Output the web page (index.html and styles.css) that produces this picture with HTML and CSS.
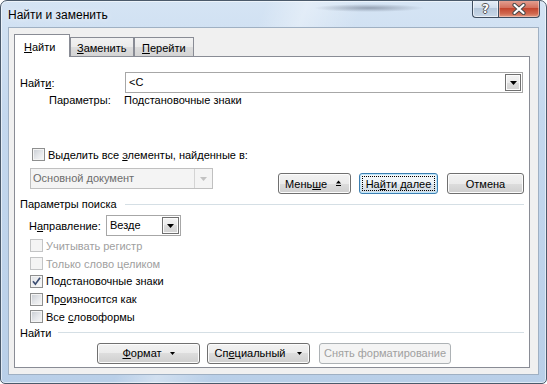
FILE: index.html
```html
<!DOCTYPE html>
<html lang="ru">
<head>
<meta charset="utf-8">
<title>Найти и заменить</title>
<link rel="stylesheet" href="styles.css">
</head>
<body>
<div class="window">
  <div class="titlebar">
    <div class="title">Найти и заменить</div>
    <div class="caption">
      <div class="cap-btn cap-help"><span>?</span></div>
      <div class="cap-btn cap-close">
        <svg width="16" height="12" viewBox="0 0 16 12">
          <path d="M3.5 2 L12.5 10 M12.5 2 L3.5 10" stroke="#4a4a4a" stroke-width="4.2" stroke-linecap="round"/>
          <path d="M3.5 2 L12.5 10 M12.5 2 L3.5 10" stroke="#ffffff" stroke-width="2.2" stroke-linecap="round"/>
        </svg>
      </div>
    </div>
  </div>
  <div class="client">
    <div class="tabs">
      <div class="tab tab-find active"><u>Н</u>айти</div>
      <div class="tab tab-replace"><u>З</u>аменить</div>
      <div class="tab tab-goto"><u>П</u>ерейти</div>
    </div>
    <div class="panel">
      <div class="find-row">
        <span class="find-label">Найт<u>и</u>:</span>
        <div class="combo combo-find">
          <span class="combo-text">&lt;C</span>
          <span class="combo-btn"><svg width="7" height="4" viewBox="0 0 7 4"><path d="M0 0H7L3.5 4Z" fill="#000"/></svg></span>
        </div>
      </div>
      <div class="params-row">
        <span class="params-label">Параметры:</span>
        <span>Подстановочные знаки</span>
      </div>
      <div class="check-row highlight-row">
        <span class="cb"></span>
        <span>Выделить все <u>э</u>лементы, найденные в:</span>
      </div>
      <div class="doc-row">
        <div class="select-disabled">
          <span class="sd-text">Основной документ</span>
          <span class="sd-btn"><svg width="7" height="4" viewBox="0 0 7 4"><path d="M0 0H7L3.5 4Z" fill="#c2c2c2"/></svg></span>
        </div>
        <div class="actions">
          <div class="btn btn-less">Мень<u>ш</u>е<svg class="less-ico" width="5" height="6" viewBox="0 0 5 6"><path d="M0 3.5L2.5 0.5L5 3.5Z" fill="#000"/><rect x="0" y="5" width="5" height="1" fill="#000"/></svg></div>
          <div class="btn btn-default">На<u>й</u>ти далее</div>
          <div class="btn btn-cancel">Отмена</div>
        </div>
      </div>
      <div class="sep sep-search"><span>Параметры поиска</span><i></i></div>
      <div class="dir-row">
        <span class="dir-label">Н<u>а</u>правление:</span>
        <div class="combo combo-dir">
          <span class="combo-text">Везде</span>
          <span class="combo-btn dir-btn"><svg width="7" height="4" viewBox="0 0 7 4"><path d="M0 0H7L3.5 4Z" fill="#000"/></svg></span>
        </div>
      </div>
      <div class="checks">
        <div class="check-row opt disabled"><span class="cb"></span><span>Учитывать регистр</span></div>
        <div class="check-row opt disabled"><span class="cb"></span><span>Только слово целиком</span></div>
        <div class="check-row opt"><span class="cb checked"><svg width="11" height="11" viewBox="0 0 11 11"><path d="M2 5.2 L4.4 8.2 L9 1.8" fill="none" stroke="#3d4f73" stroke-width="1.7"/></svg></span><span>Подстановочные знаки</span></div>
        <div class="check-row opt"><span class="cb"></span><span>Пр<u>о</u>износится как</span></div>
        <div class="check-row opt"><span class="cb"></span><span>Все <u>с</u>ловоформы</span></div>
      </div>
      <div class="sep sep-find"><span>Найти</span><i></i></div>
      <div class="bottom-row">
        <div class="btn btn-format"><span><u>Ф</u>ормат</span><svg width="5" height="3" viewBox="0 0 5 3"><path d="M0 0H5L2.5 3Z" fill="#000"/></svg></div>
        <div class="btn btn-special"><span>Сп<u>е</u>циальный</span><svg width="5" height="3" viewBox="0 0 5 3"><path d="M0 0H5L2.5 3Z" fill="#000"/></svg></div>
        <div class="btn btn-clear disabled">Снять форматирование</div>
      </div>
    </div>
  </div>
</div>
</body>
</html>
```

FILE: styles.css
```css
html, body {
  margin: 0;
  padding: 0;
  background: #ffffff;
}

body {
  width: 547px;
  height: 384px;
  overflow: hidden;
  font-family: "Liberation Sans", Arial, sans-serif;
  font-size: 11px;
  color: #000;
}

u {
  text-decoration: underline;
  text-underline-offset: 1px;
}

.window {
  box-sizing: border-box;
  width: 547px;
  height: 384px;
  border: 1px solid #4b5a6b;
  border-radius: 7px 7px 5px 5px;
  background:
    radial-gradient(ellipse 55px 4px at 368px 7px, rgba(70, 80, 100, 0.45), rgba(70, 80, 100, 0) 100%),
    linear-gradient(112deg, rgba(255,255,255,0) 0%, rgba(255,255,255,0) 38%, rgba(255,255,255,0.35) 44%, rgba(255,255,255,0) 52%, rgba(255,255,255,0) 100%),
    linear-gradient(to bottom, #d5e4f4 0%, #c4d8ee 30%, #b9cfe8 100%);
  box-shadow: inset 0 0 0 1px rgba(255, 255, 255, 0.55);
  overflow: hidden;
}

.titlebar {
  height: 26px;
  display: flex;
  justify-content: space-between;
  align-items: flex-start;
}

.title {
  margin: 7px 0 0 7px;
  line-height: 14px;
  font-size: 12px;
  color: #000;
  text-shadow: 0 0 6px rgba(255,255,255,0.9);
}

.caption {
  display: flex;
  margin: -1px 6px 0 0;
}

.cap-btn {
  box-sizing: border-box;
  height: 18px;
  border: 1px solid #3f4e60;
  border-top: none;
  display: flex;
  align-items: center;
  justify-content: center;
}

.cap-help {
  width: 26px;
  border-right: none;
  border-radius: 0 0 0 4px;
  background: linear-gradient(to bottom, #e9f0f8 0%, #d2dfee 45%, #b6c8dc 50%, #c9d8e8 100%);
  box-shadow: inset 0 0 0 1px rgba(255,255,255,0.6);
}

.cap-help span {
  font-family: "DejaVu Sans", sans-serif;
  font-weight: bold;
  font-size: 12px;
  line-height: 12px;
  color: #fff;
  text-shadow: -1px 0 0 #555, 1px 0 0 #555, 0 -1px 0 #555, 0 1px 0 #555;
}

.cap-close {
  width: 42px;
  border-radius: 0 0 4px 0;
  background: linear-gradient(to bottom, #e5a597 0%, #d4715e 45%, #c3462f 50%, #d0684f 80%, #e19a82 100%);
  box-shadow: inset 0 0 0 1px rgba(255,220,210,0.5);
}

.client {
  box-sizing: border-box;
  width: 531px;
  height: 348px;
  margin: 0 0 0 7px;
  border: 1px solid #9fb0c3;
  background: #f0f0f0;
  padding-top: 6px;
}

.tabs {
  display: flex;
  align-items: flex-end;
  height: 22px;
  margin-left: 5px;
}

.tab {
  box-sizing: border-box;
  height: 19px;
  border: 1px solid #898c95;
  border-bottom: none;
  background: linear-gradient(to bottom, #f2f2f2 0%, #ebebeb 50%, #dddddd 50%, #d4d4d4 100%);
  line-height: 14px;
  padding-top: 3px;
}

.tab.active {
  position: relative;
  z-index: 2;
  height: 23px;
  margin-bottom: -1px;
  background: #ffffff;
  padding-top: 5px;
}

.tab-find {
  width: 56px;
  padding-left: 9px;
}

.tab-replace {
  width: 64px;
  padding-left: 6px;
}

.tab-goto {
  width: 60px;
  padding-left: 7px;
}

.panel {
  position: relative;
  box-sizing: border-box;
  width: 516px;
  height: 312px;
  margin-left: 5px;
  border: 1px solid #898c95;
  background: #ffffff;
  padding: 0 5px;
}

.find-row {
  display: flex;
  align-items: center;
  height: 21px;
  margin-top: 15px;
}

.find-label {
  width: 105px;
}

.combo {
  box-sizing: border-box;
  height: 21px;
  border: 1px solid #a7a7a7;
  background: #fff;
  display: flex;
  align-items: flex-start;
  justify-content: space-between;
}

.combo-find {
  width: 398px;
}

.combo-text {
  padding-left: 3px;
  line-height: 19px;
}

.combo-btn {
  box-sizing: border-box;
  width: 16px;
  height: 17px;
  margin: 1px 1px 0 0;
  border: 1px solid #707070;
  background: linear-gradient(to bottom, #f3f3f3 0%, #ebebeb 50%, #dddddd 50%, #d2d2d2 100%);
  box-shadow: inset 0 0 0 1px #fbfbfb;
  display: flex;
  align-items: center;
  justify-content: center;
}

.params-row {
  display: flex;
  height: 14px;
  line-height: 14px;
  margin-top: 0;
}

.params-label {
  width: 75px;
  margin-left: 29px;
}

.check-row {
  display: flex;
  align-items: center;
  gap: 3px;
}

.highlight-row {
  height: 15px;
  margin-top: 40px;
  margin-left: 12px;
}

.cb {
  box-sizing: border-box;
  flex: none;
  width: 13px;
  height: 13px;
  border: 1px solid #8e8f8f;
  background: linear-gradient(135deg, #c8ccd2 0%, #e6e8eb 55%, #f8f8f8 100%);
  box-shadow: inset 0 0 0 1px #f4f4f4;
  display: flex;
  align-items: center;
  justify-content: center;
}

.cb.checked {
  background: linear-gradient(135deg, #dfe2e6 0%, #f0f1f2 55%, #fbfbfb 100%);
}

.disabled .cb {
  border-color: #c3c4c5;
  background: #f4f4f4;
  box-shadow: none;
}

.check-row.disabled {
  color: #a0a0a0;
}

.doc-row {
  display: flex;
  align-items: flex-start;
  height: 25px;
  margin-top: 6px;
}

.select-disabled {
  box-sizing: border-box;
  width: 183px;
  height: 21px;
  margin-left: 10px;
  border: 1px solid #c0c0c0;
  background: #f4f4f4;
  display: flex;
  justify-content: space-between;
  align-items: stretch;
}

.sd-text {
  padding-left: 2px;
  line-height: 19px;
  color: #6d6d6d;
}

.sd-btn {
  width: 17px;
  border-left: 1px solid #d4d4d4;
  display: flex;
  align-items: center;
  justify-content: center;
}

.actions {
  display: flex;
  margin-left: auto;
  margin-top: 5px;
}

.btn {
  position: relative;
  box-sizing: border-box;
  height: 21px;
  border: 1px solid #707070;
  border-radius: 3px;
  background: linear-gradient(to bottom, #f2f2f2 0%, #ebebeb 50%, #dddddd 50%, #cfcfcf 100%);
  box-shadow: inset 0 0 0 1px #fcfcfc;
  display: flex;
  align-items: center;
  justify-content: center;
  line-height: 14px;
}

.btn-less {
  width: 73px;
  justify-content: flex-start;
  padding-left: 6px;
}

.less-ico {
  margin-left: 9px;
  margin-bottom: 1px;
}

.btn-default {
  width: 79px;
  margin-left: 8px;
  border-color: #3c7fb1;
  box-shadow: inset 0 0 0 1px #bfe6fb;
  background: linear-gradient(to bottom, #f4f8fb 0%, #edf2f6 50%, #dfe6ec 50%, #d3dce4 100%);
}

.btn-default::after {
  content: "";
  position: absolute;
  top: 2px;
  left: 2px;
  right: 2px;
  bottom: 2px;
  border: 1px dotted #000;
}

.btn-cancel {
  width: 77px;
  margin-left: 9px;
}

.sep {
  display: flex;
  align-items: center;
  height: 14px;
  line-height: 14px;
}

.sep i {
  flex: 1;
  height: 1px;
  background: #d5dfe5;
}

.sep-search {
  margin-top: 4px;
}

.sep-search i {
  margin-left: 8px;
}

.sep-find i {
  margin-left: 7px;
}

.dir-row {
  display: flex;
  align-items: center;
  height: 21px;
  margin-top: 4px;
}

.dir-label {
  width: 77px;
  margin-left: 9px;
}

.combo-dir {
  width: 75px;
}

.combo-dir .combo-text {
  padding-left: 3px;
}

.dir-btn {
  width: 17px;
  height: 17px;
}

.checks {
  margin-top: 1px;
}

.opt {
  height: 17.75px;
  margin-left: 10px;
}

.bottom-row {
  display: flex;
  height: 21px;
  margin-top: 3px;
}

.btn-format {
  width: 103px;
  margin-left: 77px;
  gap: 8px;
}

.btn-special {
  width: 103px;
  margin-left: 7px;
  gap: 12px;
}

.btn-clear {
  width: 132px;
  margin-left: 9px;
}

.btn.disabled {
  color: #a0a0a0;
  border-color: #adb2b5;
  background: #f4f4f4;
  box-shadow: none;
}
```
